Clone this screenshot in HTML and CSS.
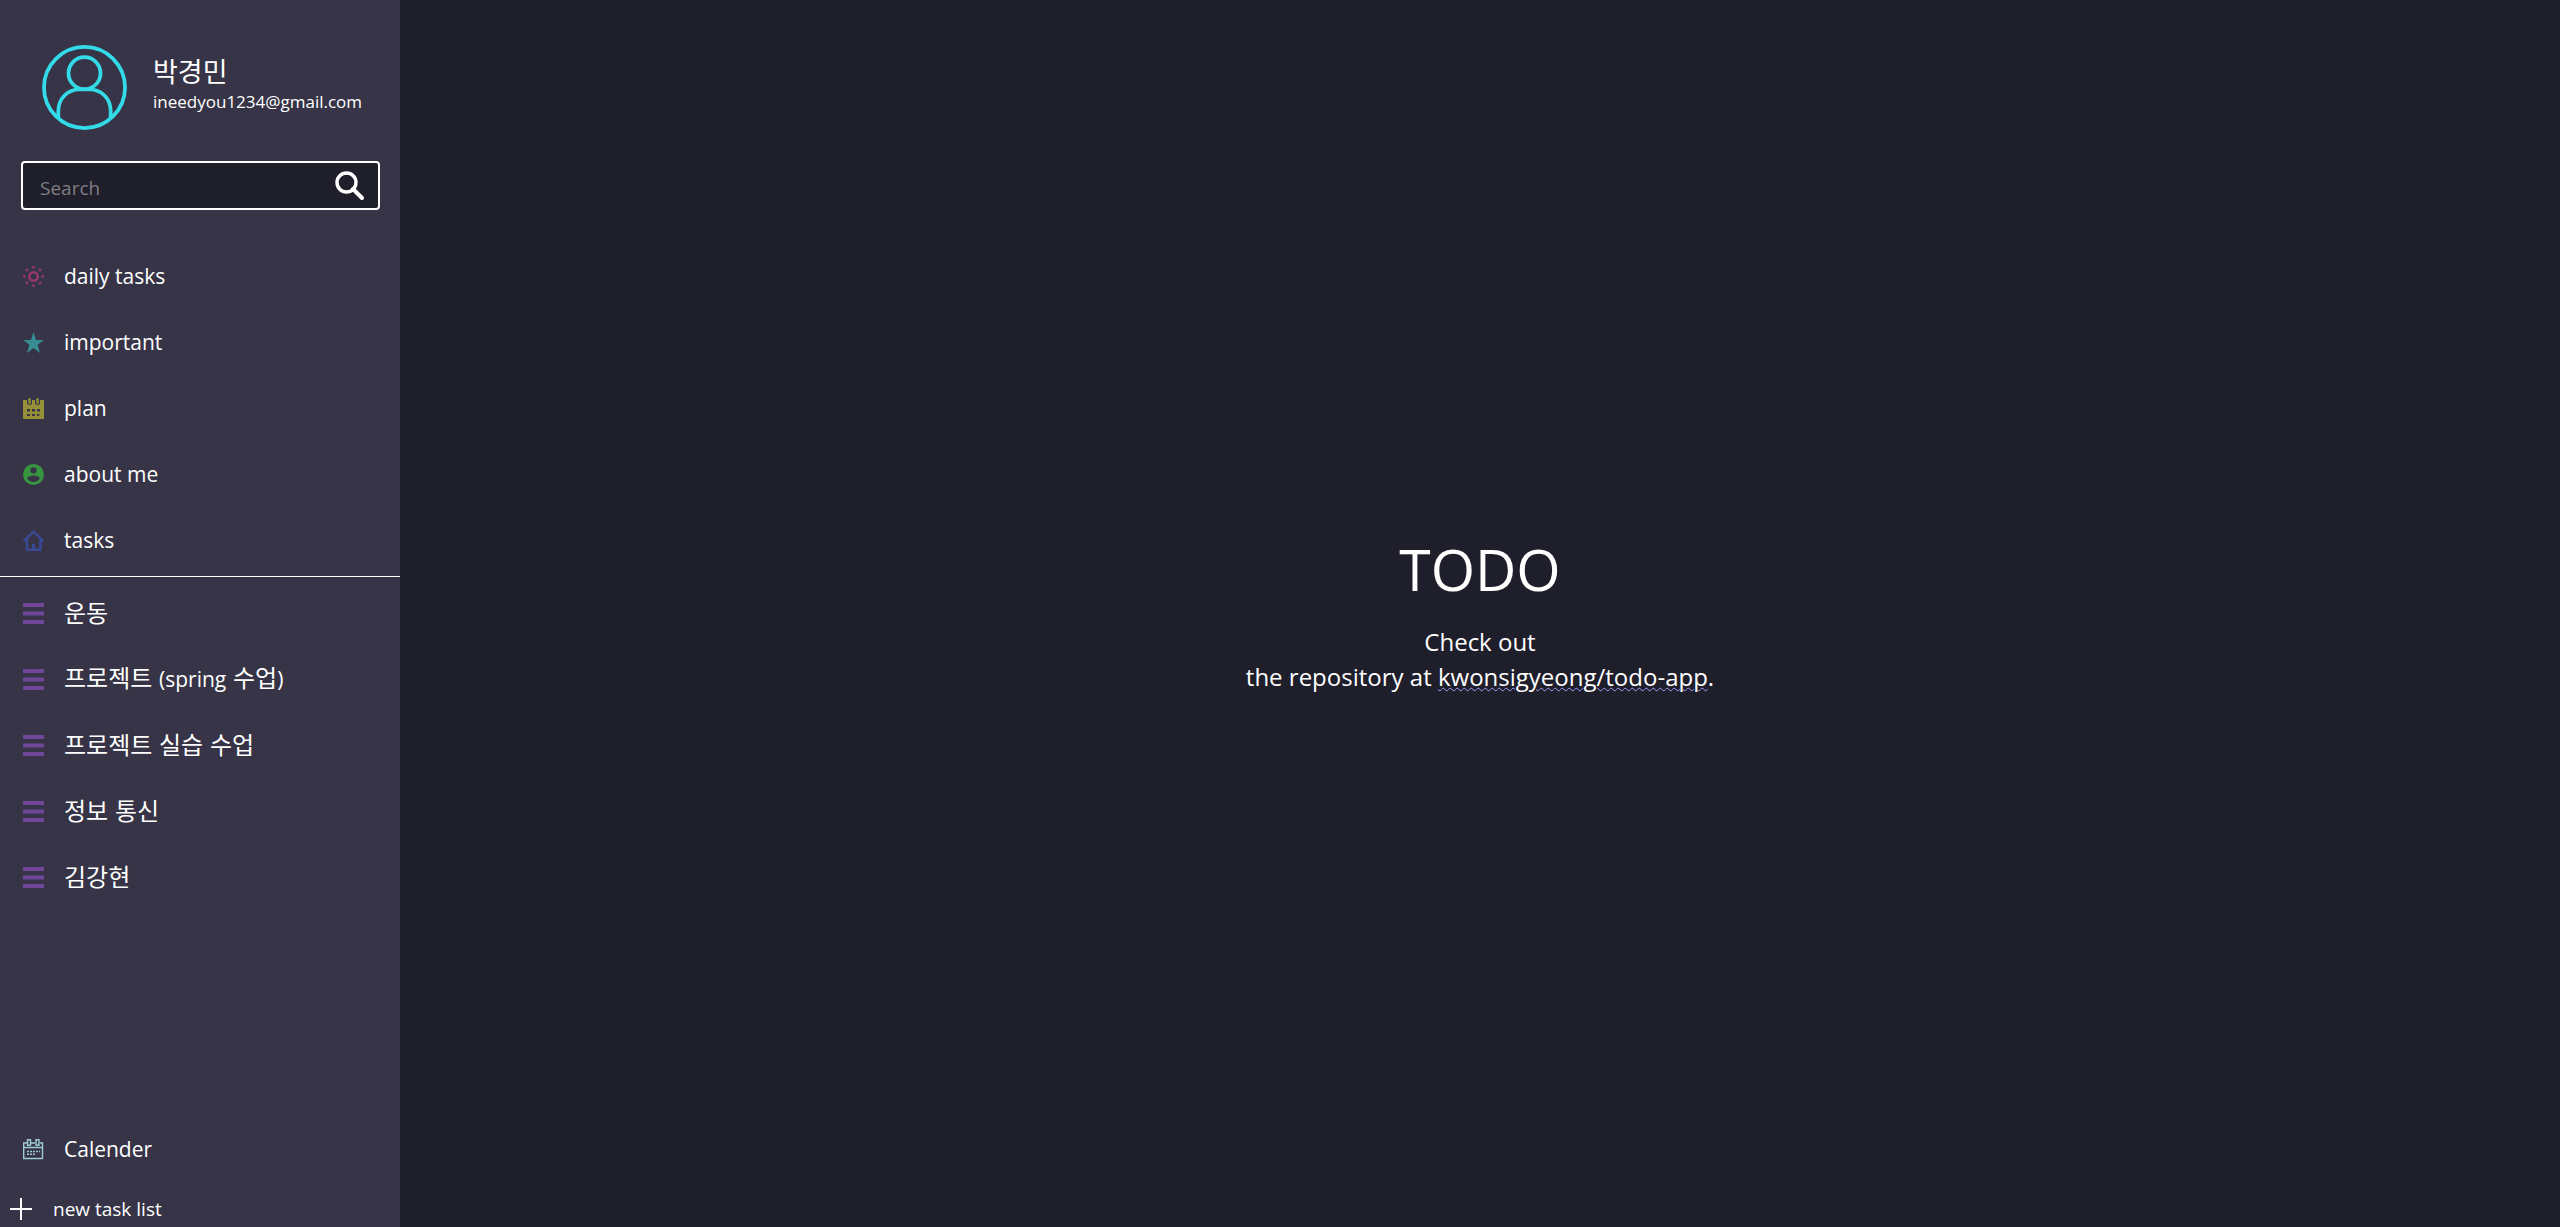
FILE: index.html
```html
<!DOCTYPE html>
<html lang="en">
<head>
<meta charset="utf-8">
<meta name="viewport" content="width=device-width, initial-scale=1">
<title>TODO</title>
<link rel="stylesheet" href="styles.css">
</head>
<body>
<div class="app">
  <aside class="sidebar">
    <header class="profile">
      <svg class="avatar" viewBox="0 0 86 86" aria-hidden="true">
        <g fill="none" stroke="#33dbe8" stroke-width="3.8">
          <circle cx="43" cy="43" r="41"/>
          <circle cx="43" cy="28.500" r="16.200"/>
          <path d="M16.500 73.500V67C16.500 54 26 45 38 45H48C60 45 69.500 54 69.500 67V73.500"/>
        </g>
      </svg>
      <div class="profile-text">
        <span class="profile-name" lang="ko">박경민</span>
        <span class="profile-mail">ineedyou1234@gmail.com</span>
      </div>
    </header>

    <form class="search" role="search">
      <input class="search-input" type="text" placeholder="Search" aria-label="Search">
      <button class="search-button" type="button" aria-label="Search">
        <svg class="search-icon" viewBox="0 0 30 30" aria-hidden="true">
          <g fill="none" stroke="#fff">
            <circle cx="11.500" cy="11.500" r="9.500" stroke-width="3.400"/>
            <path d="M18 18L27 27" stroke-width="4" stroke-linecap="round"/>
          </g>
        </svg>
      </button>
    </form>

    <nav class="menu" aria-label="Views">
      <a class="item" href="#daily">
        <svg class="icon" viewBox="0 0 21 21" aria-hidden="true">
          <circle cx="10.500" cy="10.500" r="4.200" fill="none" stroke="#95386b" stroke-width="2.600"/>
          <g fill="#95386b">
            <circle cx="10.500" cy="1.300" r="1.400"/><circle cx="10.500" cy="19.700" r="1.400"/>
            <circle cx="1.300" cy="10.500" r="1.400"/><circle cx="19.700" cy="10.500" r="1.400"/>
            <circle cx="4" cy="4" r="1.400"/><circle cx="17" cy="4" r="1.400"/>
            <circle cx="4" cy="17" r="1.400"/><circle cx="17" cy="17" r="1.400"/>
          </g>
        </svg>
        <span>daily tasks</span>
      </a>
      <a class="item" href="#important">
        <svg class="icon" viewBox="0 0 21 21" aria-hidden="true">
          <path fill="#388d95" d="M10.500 0L13 8H21L14.600 12.800L17 21L10.500 16L4 21L6.400 12.800L0 8H8Z"/>
        </svg>
        <span>important</span>
      </a>
      <a class="item" href="#plan">
        <svg class="icon" viewBox="0 0 21 21" aria-hidden="true">
          <path fill="#959138" fill-rule="evenodd" d="M0 2H4V4.500A2.500 2.500 0 0 0 9 4.500V2H12V4.500A2.500 2.500 0 0 0 17 4.500V2H21V21H0ZM4 11V13.500H7V11ZM9 11V13.500H12V11ZM14 11V13.500H17V11ZM4 16V18H7V16ZM9 16V18H12V16ZM14 16V18H15.500L17 16Z"/>
          <rect x="5.300" y="0" width="2.400" height="6" rx="1.200" fill="#959138"/>
          <rect x="13.300" y="0" width="2.400" height="6" rx="1.200" fill="#959138"/>
        </svg>
        <span>plan</span>
      </a>
      <a class="item" href="#about">
        <svg class="icon" viewBox="0 0 21 21" aria-hidden="true">
          <path fill="#38953f" fill-rule="evenodd" d="M10.500 0A10.500 10.500 0 1 1 10.500 21A10.500 10.500 0 0 1 10.500 0ZM10.500 3.200A3.150 3.150 0 1 0 10.500 9.500A3.150 3.150 0 1 0 10.500 3.200ZM4.200 14.600C5.500 16.700 7.900 18 10.500 18S15.500 16.700 16.800 14.600C16.700 12.600 12.600 11.500 10.500 11.500S4.300 12.600 4.200 14.600Z"/>
        </svg>
        <span>about me</span>
      </a>
      <a class="item" href="#tasks">
        <svg class="icon" viewBox="0 0 21 21" aria-hidden="true">
          <path fill="#384a95" fill-rule="evenodd" d="M10.500 0L21 10V11.200H18.700V21H2.700V11.200H0V10ZM10.500 3.300L5.200 8.400V18.500H9V14H12V18.500H16.200V8.400Z"/>
        </svg>
        <span>tasks</span>
      </a>
    </nav>

    <nav class="lists" aria-label="Task lists" lang="ko">
      <a class="item" href="#list1"><svg class="icon" viewBox="0 0 21 21" aria-hidden="true"><path fill="#6f4698" d="M0 0H21V4H0ZM0 8.500H21V12.500H0ZM0 17H21V21H0Z"/></svg><span class="list-name">운동</span></a>
      <a class="item" href="#list2"><svg class="icon" viewBox="0 0 21 21" aria-hidden="true"><path fill="#6f4698" d="M0 0H21V4H0ZM0 8.500H21V12.500H0ZM0 17H21V21H0Z"/></svg><span class="list-name">프로젝트 <span class="latin">(spring</span> 수업<span class="latin">)</span></span></a>
      <a class="item" href="#list3"><svg class="icon" viewBox="0 0 21 21" aria-hidden="true"><path fill="#6f4698" d="M0 0H21V4H0ZM0 8.500H21V12.500H0ZM0 17H21V21H0Z"/></svg><span class="list-name">프로젝트 실습 수업</span></a>
      <a class="item" href="#list4"><svg class="icon" viewBox="0 0 21 21" aria-hidden="true"><path fill="#6f4698" d="M0 0H21V4H0ZM0 8.500H21V12.500H0ZM0 17H21V21H0Z"/></svg><span class="list-name">정보 통신</span></a>
      <a class="item" href="#list5"><svg class="icon" viewBox="0 0 21 21" aria-hidden="true"><path fill="#6f4698" d="M0 0H21V4H0ZM0 8.500H21V12.500H0ZM0 17H21V21H0Z"/></svg><span class="list-name">김강현</span></a>
    </nav>

    <footer class="bottom">
      <a class="item" href="#calendar">
        <svg class="icon" viewBox="0 0 21 21" aria-hidden="true">
          <g fill="none" stroke="#9ccbd3" stroke-width="1.400">
            <path d="M4 4H.7V19.500H19.500V4H17M8 4H12M.7 8.500H19.500"/>
            <path d="M4.500 .7H7.500V6.300H4.500ZM13 .7H16V6.300H13Z"/>
            <path d="M4 12.500H17M4 15.300H12" stroke-dasharray="2 1"/>
          </g>
        </svg>
        <span>Calender</span>
      </a>
      <button class="new-list" type="button">
        <svg class="plus" viewBox="0 0 22 22" aria-hidden="true"><path fill="#fff" d="M10 0H12V10H22V12H12V22H10V12H0V10H10Z"/></svg>
        <span>new task list</span>
      </button>
    </footer>
  </aside>

  <main class="welcome">
    <h1 class="title">TODO</h1>
    <p class="intro">Check out<br>the repository at <a class="repo" href="#repo">kwonsigyeong/todo-app</a>.</p>
  </main>
</div>
</body>
</html>
```
FILE: styles.css
```css
* {
  box-sizing: border-box;
}

body {
  margin: 0;
  background: #1f1e2b;
  color: #fff;
  font-family: "Open Sans", "Noto Sans CJK KR", sans-serif;
  font-size: 21px;
  line-height: 32px;
}

a {
  color: inherit;
  text-decoration: none;
}

svg {
  display: block;
  flex: none;
}

.app {
  display: flex;
  min-height: 100vh;
}

.sidebar {
  display: flex;
  flex-direction: column;
  flex: none;
  width: 400px;
  background: #363446;
}

.profile {
  display: flex;
  align-items: center;
  gap: 26px;
  padding: 45px 42px 31px;
}

.avatar {
  width: 85px;
  height: 85px;
}

.profile-text {
  display: flex;
  flex-direction: column;
  padding-bottom: 4px;
}

.profile-name {
  font-size: 27px;
  line-height: 32px;
}

.profile-mail {
  font-size: 17px;
  line-height: 28px;
}

.search {
  display: flex;
  align-items: center;
  height: 49px;
  margin: 0 20px 33px 21px;
  padding: 0 13px 0 17px;
  border: 2px solid #fff;
  border-radius: 4px;
  background: #1f1e2b;
}

.search-input {
  flex: 1;
  min-width: 0;
  padding: 4px 0 0;
  border: 0;
  outline: 0;
  background: none;
  color: #fff;
  font: inherit;
  font-size: 19px;
}

.search-input::placeholder {
  color: #7f7f82;
}

.search-button {
  padding: 0;
  border: 0;
  background: none;
}

.search-icon {
  width: 30px;
  height: 30px;
}

.menu {
  padding-bottom: 3px;
  border-bottom: 1px solid #fff;
}

.lists {
  padding-top: 3px;
  font-family: "Noto Sans CJK KR", sans-serif;
  font-size: 24px;
}

.list-name {
  padding-bottom: 3px;
}

.latin {
  font-family: "Open Sans", sans-serif;
  font-size: 21px;
}

.item {
  display: flex;
  align-items: center;
  gap: 20px;
  height: 66px;
  padding: 0 23px;
}

.icon {
  width: 21px;
  height: 21px;
}

.bottom {
  margin-top: auto;
}

.new-list {
  display: flex;
  align-items: center;
  gap: 21px;
  width: 100%;
  height: 36px;
  margin-top: 9px;
  padding: 0 10px;
  border: 0;
  background: none;
  color: inherit;
  font: inherit;
  font-size: 19px;
}

.plus {
  width: 22px;
  height: 22px;
}

.welcome {
  display: flex;
  flex: 1;
  flex-direction: column;
  align-items: center;
  justify-content: center;
  padding-bottom: 4px;
  text-align: center;
}

.title {
  margin: 0 0 15px;
  font-size: 57px;
  font-weight: 400;
  line-height: 80px;
}

.intro {
  margin: 0;
  font-size: 24px;
  line-height: 35px;
}

.repo {
  text-decoration: underline wavy #9c9cff 1px;
}
```
